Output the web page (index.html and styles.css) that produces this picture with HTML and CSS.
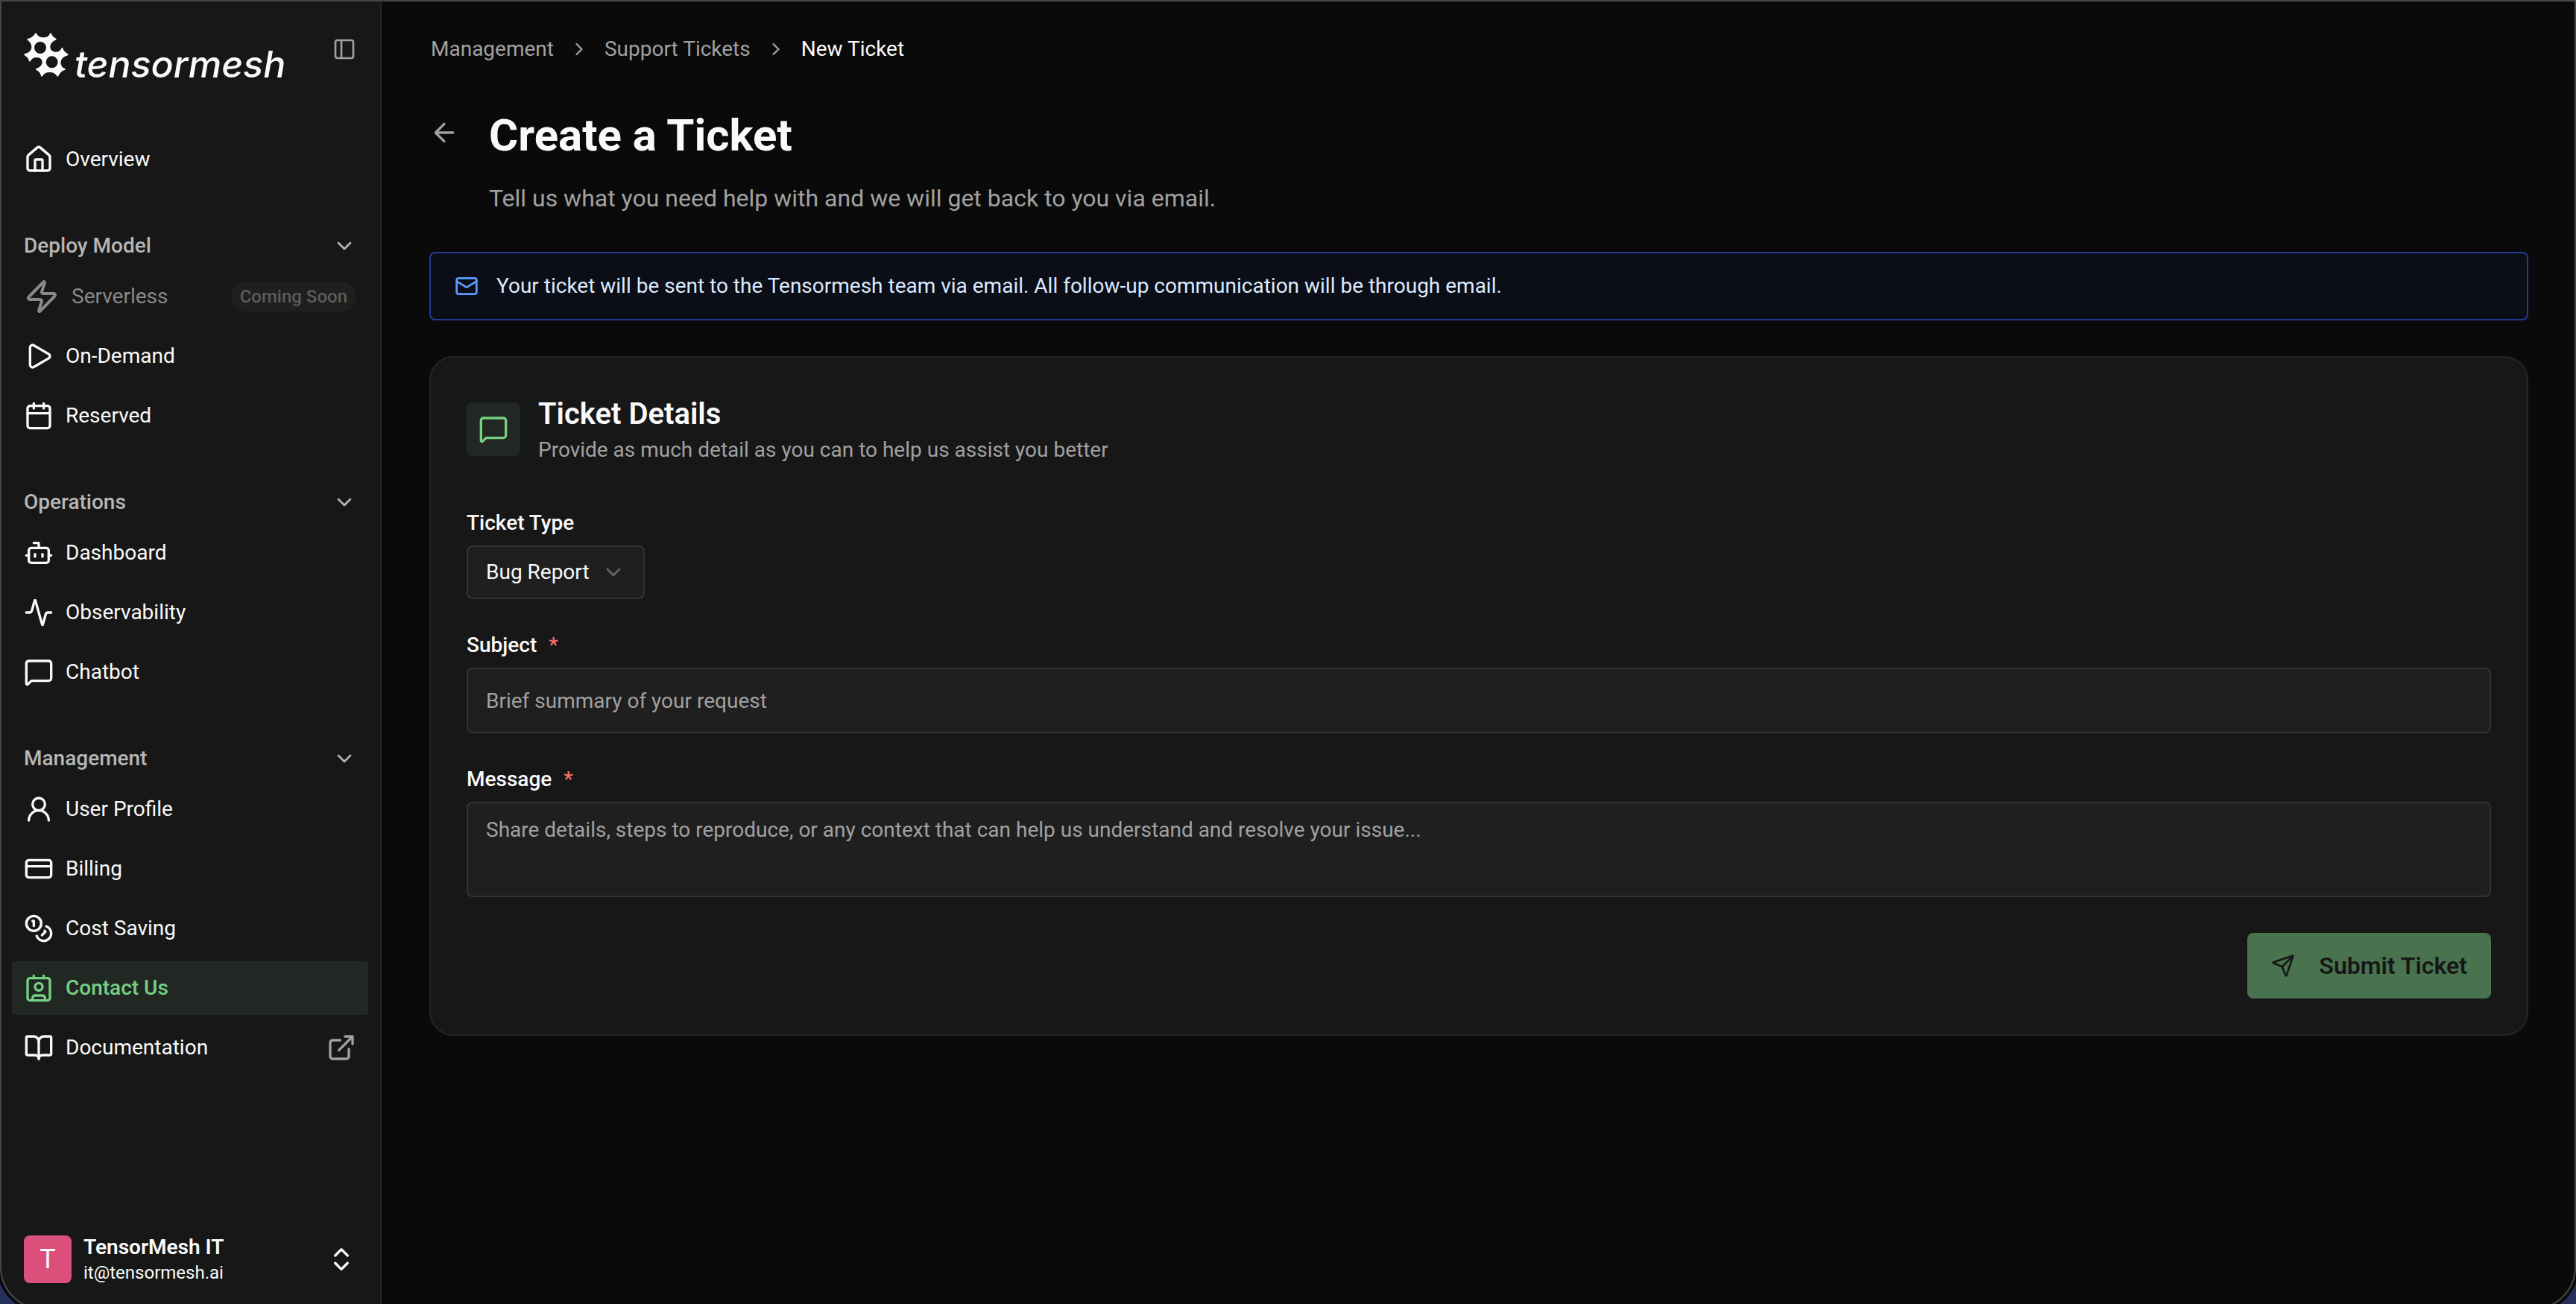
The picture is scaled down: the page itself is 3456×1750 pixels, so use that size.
FILE: index.html
```html
<!DOCTYPE html>
<html lang="en">
<head>
    <meta charset="UTF-8">
    <meta name="viewport" content="width=device-width, initial-scale=1.0">
    <title>New Ticket - Tensormesh</title>
    <link rel="stylesheet" href="styles.css">
</head>
<body>
    <div class="app">
        <aside class="sidebar">
            <div class="sidebar-header">
                <a class="logo" href="#">
                    <svg class="logo-mark" viewBox="18 24 180 180" aria-hidden="true">
                        <path fill-rule="evenodd" d="M66 28 Q74 46 97 46 Q120 46 126 28 Q130 42 146 50 Q121 60 121 84 Q124 104 146 104 Q166 104 172 87 Q176 102 194 112 Q166 120 163 142 Q163 164 182 171 Q164 176 154 197 Q144 180 122 180 Q100 180 90 197 Q86 178 69 171 Q95 162 95 142 Q94 121 70 120 Q50 120 42 137 Q38 120 22 112 Q50 104 52 84 Q52 62 34 51 Q58 44 66 28 Z M84 57 A27 27 0 1 0 84 111 A27 27 0 1 0 84 57 Z M131 115 A27 27 0 1 0 131 169 A27 27 0 1 0 131 115 Z"/>
                    </svg>
                    <span class="logo-text">tensormesh</span>
                </a>
                <button class="icon-button panel-button" type="button" aria-label="Toggle sidebar">
                    <svg class="icon small" viewBox="0 0 24 24"><rect x="3" y="3" width="18" height="18" rx="2"/><path d="M9 3v18"/></svg>
                </button>
            </div>

            <nav class="nav">
                <div class="nav-group">
                    <a class="nav-item" href="#">
                        <svg class="icon" viewBox="0 0 24 24"><path d="M15 21v-8a1 1 0 0 0-1-1h-4a1 1 0 0 0-1 1v8"/><path d="M3 10a2 2 0 0 1 .709-1.528l7-5.999a2 2 0 0 1 2.582 0l7 5.999A2 2 0 0 1 21 10v9a2 2 0 0 1-2 2H5a2 2 0 0 1-2-2z"/></svg>
                        <span>Overview</span>
                    </a>
                </div>

                <div class="nav-group">
                    <button class="nav-title" type="button">
                        <span>Deploy Model</span>
                        <svg class="icon small" viewBox="0 0 24 24"><path d="m6 9 6 6 6-6"/></svg>
                    </button>
                    <a class="nav-item disabled" aria-disabled="true">
                        <svg class="icon large" viewBox="0 0 24 24"><path d="M4 14a1 1 0 0 1-.78-1.63l9.9-10.2a.5.5 0 0 1 .86.46l-1.92 6.02A1 1 0 0 0 13 10h7a1 1 0 0 1 .78 1.63l-9.9 10.2a.5.5 0 0 1-.86-.46l1.92-6.02A1 1 0 0 0 11 14z"/></svg>
                        <span>Serverless</span>
                        <span class="badge">Coming Soon</span>
                    </a>
                    <a class="nav-item" href="#">
                        <svg class="icon" viewBox="0 0 24 24"><path d="M5 5a2 2 0 0 1 3.008-1.728l11.997 6.998a2 2 0 0 1 .003 3.458l-12 7A2 2 0 0 1 5 19z"/></svg>
                        <span>On-Demand</span>
                    </a>
                    <a class="nav-item" href="#">
                        <svg class="icon" viewBox="0 0 24 24"><path d="M8 2v4M16 2v4M3 10h18"/><rect x="3" y="4" width="18" height="18" rx="2"/></svg>
                        <span>Reserved</span>
                    </a>
                </div>

                <div class="nav-group">
                    <button class="nav-title" type="button">
                        <span>Operations</span>
                        <svg class="icon small" viewBox="0 0 24 24"><path d="m6 9 6 6 6-6"/></svg>
                    </button>
                    <a class="nav-item" href="#">
                        <svg class="icon" viewBox="0 0 24 24"><path d="M12 8V4H8"/><rect x="4" y="8" width="16" height="12" rx="2"/><path d="M2 14h2M20 14h2M15 13v2M9 13v2"/></svg>
                        <span>Dashboard</span>
                    </a>
                    <a class="nav-item" href="#">
                        <svg class="icon" viewBox="0 0 24 24"><path d="M22 12h-2.48a2 2 0 0 0-1.93 1.46l-2.35 8.36a.25.25 0 0 1-.48 0L9.24 2.18a.25.25 0 0 0-.48 0l-2.35 8.36A2 2 0 0 1 4.49 12H2"/></svg>
                        <span>Observability</span>
                    </a>
                    <a class="nav-item" href="#">
                        <svg class="icon" viewBox="0 0 24 24"><path d="M22 17a2 2 0 0 1-2 2H6.828a2 2 0 0 0-1.414.586l-2.202 2.202A.71.71 0 0 1 2 21.286V5a2 2 0 0 1 2-2h16a2 2 0 0 1 2 2z"/></svg>
                        <span>Chatbot</span>
                    </a>
                </div>

                <div class="nav-group">
                    <button class="nav-title" type="button">
                        <span>Management</span>
                        <svg class="icon small" viewBox="0 0 24 24"><path d="m6 9 6 6 6-6"/></svg>
                    </button>
                    <a class="nav-item" href="#">
                        <svg class="icon" viewBox="0 0 24 24"><circle cx="12" cy="8" r="5"/><path d="M20 21a8 8 0 0 0-16 0"/></svg>
                        <span>User Profile</span>
                    </a>
                    <a class="nav-item" href="#">
                        <svg class="icon" viewBox="0 0 24 24"><rect x="2" y="5" width="20" height="14" rx="2"/><path d="M2 10h20"/></svg>
                        <span>Billing</span>
                    </a>
                    <a class="nav-item" href="#">
                        <svg class="icon" viewBox="0 0 24 24"><circle cx="8" cy="8" r="6"/><path d="M18.09 10.37A6 6 0 1 1 10.34 18"/><path d="M7 6h1v4"/><path d="m16.71 13.88.7.71-2.82 2.82"/></svg>
                        <span>Cost Saving</span>
                    </a>
                    <a class="nav-item active" href="#" aria-current="page">
                        <svg class="icon" viewBox="0 0 24 24"><path d="M16 2v2M8 2v2"/><path d="M7 22v-2a2 2 0 0 1 2-2h6a2 2 0 0 1 2 2v2"/><circle cx="12" cy="11" r="3"/><rect x="3" y="4" width="18" height="18" rx="2"/></svg>
                        <span>Contact Us</span>
                    </a>
                    <a class="nav-item" href="#">
                        <svg class="icon" viewBox="0 0 24 24"><path d="M12 7v14"/><path d="M3 18a1 1 0 0 1-1-1V4a1 1 0 0 1 1-1h5a4 4 0 0 1 4 4 4 4 0 0 1 4-4h5a1 1 0 0 1 1 1v13a1 1 0 0 1-1 1h-6a3 3 0 0 0-3 3 3 3 0 0 0-3-3z"/></svg>
                        <span>Documentation</span>
                        <svg class="icon external" viewBox="0 0 24 24"><path d="M15 3h6v6M10 14 21 3M18 13v6a2 2 0 0 1-2 2H5a2 2 0 0 1-2-2V8a2 2 0 0 1 2-2h6"/></svg>
                    </a>
                </div>
            </nav>

            <button class="account" type="button">
                <span class="avatar">T</span>
                <span class="account-info">
                    <span class="account-name">TensorMesh IT</span>
                    <span class="account-email">it@tensormesh.ai</span>
                </span>
                <svg class="icon" viewBox="0 0 24 24"><path d="m7 15 5 5 5-5M7 9l5-5 5 5"/></svg>
            </button>
        </aside>

        <main class="main">
            <nav class="breadcrumbs" aria-label="Breadcrumb">
                <a href="#">Management</a>
                <svg class="icon tiny" viewBox="0 0 24 24"><path d="m9 18 6-6-6-6"/></svg>
                <a href="#">Support Tickets</a>
                <svg class="icon tiny" viewBox="0 0 24 24"><path d="m9 18 6-6-6-6"/></svg>
                <span class="current">New Ticket</span>
            </nav>

            <header class="page-header">
                <button class="icon-button back-button" type="button" aria-label="Back">
                    <svg class="icon" viewBox="0 0 24 24"><path d="m12 19-7-7 7-7M19 12H5"/></svg>
                </button>
                <div class="page-heading">
                    <h1>Create a Ticket</h1>
                    <p>Tell us what you need help with and we will get back to you via email.</p>
                </div>
            </header>

            <div class="notice">
                <svg class="icon small" viewBox="0 0 24 24"><path d="m22 7-8.991 5.727a2 2 0 0 1-2.009 0L2 7"/><rect x="2" y="4" width="20" height="16" rx="2"/></svg>
                <p>Your ticket will be sent to the Tensormesh team via email. All follow-up communication will be through email.</p>
            </div>

            <section class="card">
                <div class="card-header">
                    <div class="card-icon">
                        <svg class="icon" viewBox="0 0 24 24"><path d="M22 17a2 2 0 0 1-2 2H6.828a2 2 0 0 0-1.414.586l-2.202 2.202A.71.71 0 0 1 2 21.286V5a2 2 0 0 1 2-2h16a2 2 0 0 1 2 2z"/></svg>
                    </div>
                    <div>
                        <h2>Ticket Details</h2>
                        <p>Provide as much detail as you can to help us assist you better</p>
                    </div>
                </div>

                <form class="ticket-form">
                    <div class="field">
                        <label for="type">Ticket Type</label>
                        <div class="select">
                            <select id="type" name="type">
                                <option value="bug">Bug Report</option>
                            </select>
                            <svg class="icon small select-arrow" viewBox="0 0 24 24"><path d="m6 9 6 6 6-6"/></svg>
                        </div>
                    </div>

                    <div class="field">
                        <label for="subject">Subject <span class="required">*</span></label>
                        <input type="text" id="subject" name="subject" placeholder="Brief summary of your request" required>
                    </div>

                    <div class="field">
                        <label for="message">Message <span class="required">*</span></label>
                        <textarea id="message" name="message" placeholder="Share details, steps to reproduce, or any context that can help us understand and resolve your issue..." required></textarea>
                    </div>

                    <button class="submit" type="submit" disabled>
                        <svg class="icon small" viewBox="0 0 24 24"><path d="M14.536 21.686a.5.5 0 0 0 .937-.024l6.5-19a.496.496 0 0 0-.635-.635l-19 6.5a.5.5 0 0 0-.024.937l7.93 3.18a2 2 0 0 1 1.112 1.11z"/><path d="m21.854 2.147-10.94 10.939"/></svg>
                        <span>Submit Ticket</span>
                    </button>
                </form>
            </section>
        </main>
    </div>

    <div class="window-frame"></div>
</body>
</html>
```
FILE: styles.css
```css
* {
    box-sizing: border-box;
}
body {
    background-color: #0a0a0a;
    color: #fafafa;
    font-family: Roboto, "Liberation Sans", sans-serif;
    font-size: 28px;
    line-height: 40px;
    margin: 0;
}
h1, h2, p {
    margin: 0;
}
a {
    color: inherit;
    text-decoration: none;
}
button, input, select, textarea {
    font: inherit;
    color: inherit;
}
button {
    background: none;
    border: none;
    padding: 0;
    cursor: pointer;
}

/* Icons */
.icon {
    width: 40px;
    height: 40px;
    flex-shrink: 0;
    display: block;
    fill: none;
    stroke: currentColor;
    stroke-width: 2;
    stroke-linecap: round;
    stroke-linejoin: round;
}
.icon.large {
    width: 48px;
    height: 48px;
}
.icon.small {
    width: 32px;
    height: 32px;
}
.icon.tiny {
    width: 28px;
    height: 28px;
}
.icon-button {
    color: #a1a1a1;
}

/* Layout */
.app {
    display: flex;
    min-height: 100vh;
}
.sidebar {
    width: 512px;
    flex-shrink: 0;
    display: flex;
    flex-direction: column;
    background: #171717;
    border-right: 2px solid #262626;
}
.main {
    flex: 1;
    min-width: 0;
    padding: 46px 64px;
}

/* Sidebar */
.sidebar-header {
    display: flex;
    justify-content: space-between;
    align-items: flex-start;
    padding: 44px 32px 74px;
}
.logo {
    display: flex;
    align-items: baseline;
    gap: 8px;
    height: 60px;
}
.logo-mark {
    width: 60px;
    height: 60px;
    fill: #fafafa;
    stroke: #fafafa;
    stroke-width: 6;
    stroke-linejoin: round;
}
.logo-text {
    font-family: Inter, "Open Sans", sans-serif;
    font-style: italic;
    font-size: 50px;
    font-weight: 500;
    line-height: 60px;
}
.panel-button {
    padding: 6px 0;
}
.nav {
    flex: 1;
    display: flex;
    flex-direction: column;
    gap: 48px;
    padding: 0 16px;
}
.nav-group {
    display: flex;
    flex-direction: column;
    gap: 8px;
}
.nav-title {
    display: flex;
    justify-content: space-between;
    align-items: center;
    height: 64px;
    margin-bottom: -8px;
    padding: 0 16px;
    color: #b6b6b6;
    font-weight: 500;
}
.nav-item {
    display: flex;
    align-items: center;
    gap: 16px;
    height: 72px;
    padding: 0 16px;
    border-radius: 4px;
}
.nav-item.active {
    background: #212823;
    color: #76d084;
    font-weight: 500;
}
.nav-item.disabled {
    color: #898989;
}
.badge {
    margin-left: auto;
    padding: 0 12px;
    border-radius: 20px;
    background: #1f1f1f;
    color: #5c5c5c;
    font-size: 24px;
    font-weight: 500;
}
.external {
    margin-left: auto;
    color: #a1a1a1;
}
.account {
    display: flex;
    align-items: center;
    gap: 16px;
    padding: 26px 32px;
    text-align: left;
}
.avatar {
    width: 64px;
    height: 64px;
    border-radius: 8px;
    background: #db4f7b;
    font-size: 36px;
    line-height: 64px;
    text-align: center;
}
.account-info {
    flex: 1;
    display: flex;
    flex-direction: column;
}
.account-name {
    font-weight: 600;
    line-height: 36px;
}
.account-email {
    font-size: 24px;
    line-height: 32px;
}

/* Page header */
.breadcrumbs {
    display: flex;
    align-items: center;
    gap: 20px;
    padding: 0 2px;
    color: #a1a1a1;
}
.breadcrumbs .current {
    color: #fafafa;
}
.page-header {
    display: flex;
    align-items: flex-start;
    gap: 40px;
    margin-top: 60px;
}
.back-button {
    padding: 12px 0;
}
.page-heading h1 {
    font-size: 60px;
    font-weight: 700;
    line-height: 72px;
}
.page-heading p {
    margin-top: 24px;
    color: #a1a1a1;
    font-size: 32px;
    line-height: 48px;
}
.notice {
    display: flex;
    align-items: center;
    gap: 24px;
    margin: 48px 0;
    padding: 24px 32px;
    background: #0b0d17;
    border: 2px solid #243a94;
    border-radius: 8px;
    color: #dbeafe;
}
.notice .icon {
    color: #5c9dff;
}

/* Ticket card */
.card {
    padding: 48px;
    background: #171717;
    border: 2px solid #262626;
    border-radius: 32px;
}
.card-header {
    display: flex;
    align-items: center;
    gap: 24px;
}
.card-icon {
    padding: 16px;
    border-radius: 8px;
    background: #212823;
    color: #76d084;
}
.card-header h2 {
    font-size: 40px;
    font-weight: 600;
    line-height: 56px;
}
.card-header p {
    color: #a1a1a1;
}
.ticket-form {
    display: flex;
    flex-direction: column;
    gap: 48px;
    margin-top: 64px;
}
.field {
    display: flex;
    flex-direction: column;
    align-items: flex-start;
    gap: 16px;
}
.field label {
    display: flex;
    gap: 16px;
    font-weight: 500;
    line-height: 28px;
}
.required {
    color: #f8706f;
}
.field input, .field select, .field textarea {
    display: block;
    width: 100%;
    padding: 0 24px;
    background: #1f1f1f;
    border: 2px solid #333333;
    border-radius: 8px;
    outline: none;
}
.field input {
    height: 88px;
}
.field textarea {
    height: 128px;
    padding: 16px 24px;
    resize: none;
}
.field input::placeholder, .field textarea::placeholder {
    color: #a1a1a1;
    opacity: 1;
}
.select {
    position: relative;
}
.field select {
    width: auto;
    height: 72px;
    padding-right: 72px;
    appearance: none;
}
.select-arrow {
    position: absolute;
    top: 20px;
    right: 26px;
    color: #666666;
    pointer-events: none;
}
.submit {
    display: flex;
    align-self: flex-end;
    align-items: center;
    gap: 32px;
    height: 88px;
    padding: 0 32px;
    border-radius: 8px;
    background: #49734f;
    color: #171717;
    font-size: 32px;
    font-weight: 600;
    cursor: default;
}

/* Window edge with rounded bottom corners */
.window-frame {
    position: fixed;
    inset: 0 0 -8px 0;
    border: 2px solid #474747;
    border-radius: 0 0 58px 58px;
    box-shadow: 0 0 0 4px #0a0a0a, 0 0 0 40px #26305c;
    pointer-events: none;
}
```
